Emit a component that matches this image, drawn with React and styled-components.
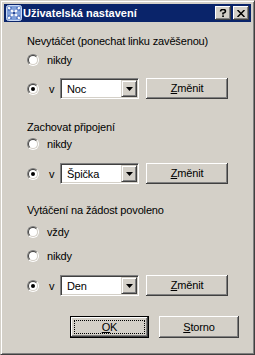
import React from 'react';
import styled, { createGlobalStyle } from 'styled-components';

const GlobalStyle = createGlobalStyle`
  html, body {
    margin: 0;
    padding: 0;
    background: #d4d0c8;
  }
  body {
    font-family: 'Liberation Sans', Arial, sans-serif;
    font-size: 11px;
    letter-spacing: -0.15px;
    color: #000;
  }
`;

const Window = styled.div`
  box-sizing: border-box;
  width: 255px;
  height: 355px;
  background: #d4d0c8;
  border: 1px solid;
  border-color: #d4d0c8 #404040 #404040 #d4d0c8;
  box-shadow: inset 1px 1px #fff, inset -1px -1px #808080;
  padding: 3px;
  display: flex;
  flex-direction: column;
`;

const TitleBar = styled.div`
  height: 18px;
  background: #0a246a;
  display: flex;
  align-items: center;
  padding: 0 2px;
`;

const TitleText = styled.span`
  flex: 1;
  margin-left: 1px;
  color: #fff;
  font-weight: bold;
  font-size: 11px;
  letter-spacing: 0;
  white-space: nowrap;
`;

const CaptionButton = styled.div`
  box-sizing: border-box;
  width: 16px;
  height: 14px;
  margin-left: ${p => p.gap || 0}px;
  background: #d4d0c8;
  box-shadow: inset -1px -1px #404040, inset 1px 1px #fff, inset -2px -2px #808080;
  display: flex;
  align-items: center;
  justify-content: center;
`;

const Client = styled.div`
  flex: 1;
  display: flex;
  flex-direction: column;
  padding: 0 12px 0 23px;
`;

const SectionLabel = styled.div`
  height: 13px;
  line-height: 13px;
  margin-top: ${p => p.top}px;
  white-space: nowrap;
`;

const RadioRow = styled.div`
  height: ${p => (p.tall ? 21 : 16)}px;
  margin-top: ${p => p.top}px;
  display: flex;
  align-items: center;
`;

const RadioWrap = styled.span`
  position: relative;
  display: flex;
  align-items: center;
  justify-content: center;
  width: 12px;
  height: 12px;
  flex: none;
`;

const Radio = styled.span`
  box-sizing: border-box;
  width: 12px;
  height: 12px;
  border-radius: 50%;
  border: 1px solid;
  border-color: #808080 #fff #fff #808080;
  display: flex;
  align-items: center;
  justify-content: center;

  &::before {
    content: '';
    box-sizing: border-box;
    width: 10px;
    height: 10px;
    border-radius: 50%;
    border: 1px solid;
    border-color: #404040 #d4d0c8 #d4d0c8 #404040;
    background: #fff;
  }
`;

const Dot = styled.span`
  position: absolute;
  width: 4px;
  height: 4px;
  border-radius: 50%;
  background: #000;
`;

const RadioLabel = styled.span`
  margin-left: ${p => p.gap}px;
  width: ${p => (p.fixed ? `${p.fixed}px` : 'auto')};
  white-space: nowrap;
`;

const Combo = styled.div`
  box-sizing: border-box;
  width: 79px;
  height: 21px;
  background: #fff;
  border: 1px solid;
  border-color: #808080 #fff #fff #808080;
  box-shadow: inset 1px 1px #404040, inset -1px -1px #d4d0c8;
  padding: 2px;
  display: flex;
  align-items: center;
`;

const ComboText = styled.span`
  flex: 1;
  padding-left: 4px;
`;

const ComboArrow = styled.span`
  box-sizing: border-box;
  width: 16px;
  height: 17px;
  margin-right: -1px;
  background: #d4d0c8;
  border: 1px solid;
  border-color: #d4d0c8 #404040 #404040 #d4d0c8;
  box-shadow: inset 1px 1px #fff, inset -1px -1px #808080;
  display: flex;
  align-items: center;
  justify-content: center;
`;

const Button = styled.div`
  box-sizing: border-box;
  width: ${p => p.w || 80}px;
  height: ${p => p.h || 21}px;
  margin-left: ${p => p.gap || 0}px;
  background: #d4d0c8;
  box-shadow: inset -1px -1px #404040, inset 1px 1px #fff, inset -2px -2px #808080;
  border: ${p => (p.primary ? '1px solid #000' : 'none')};
  position: relative;
  display: flex;
  align-items: center;
  justify-content: center;
  padding-bottom: 1px;
`;

const Focus = styled.span`
  position: absolute;
  inset: 3px;
  border: 1px dotted #000;
`;

const ButtonRow = styled.div`
  margin-top: ${p => p.top}px;
  display: flex;
  justify-content: flex-end;
`;

const AppIcon = () => (
  <svg width="16" height="16" viewBox="0 0 16 16">
    <rect x="0.5" y="0.5" width="15" height="15" rx="2" fill="#7f9fd8" stroke="#c8d8f4" />
    <path d="M3 3 L7 7 M13 3 L9 7 M3 13 L7 9 M13 13 L9 9" stroke="#fff" strokeWidth="2.2" strokeLinecap="round" />
    <circle cx="8" cy="8" r="1.6" fill="#2a4a9a" />
    <path d="M2 5 h3 v-3 M14 5 h-3 v-3 M2 11 h3 v3 M14 11 h-3 v3" stroke="#3056b0" strokeWidth="1" fill="none" />
  </svg>
);

const ArrowDown = () => (
  <svg width="7" height="4" viewBox="0 0 7 4">
    <path d="M0 0 H7 L3.5 4 Z" fill="#000" />
  </svg>
);

const RadioButton = ({ checked }) => (
  <RadioWrap>
    <Radio />
    {checked && <Dot />}
  </RadioWrap>
);

const ChoiceRow = ({ top, value }) => (
  <RadioRow tall top={top}>
    <RadioButton checked />
    <RadioLabel gap={10} fixed={11}>v</RadioLabel>
    <Combo>
      <ComboText>{value}</ComboText>
      <ComboArrow><ArrowDown /></ComboArrow>
    </Combo>
    <Button gap={7} w={82}>
      <span><u>Z</u>měnit</span>
    </Button>
  </RadioRow>
);

const App = () => (
  <>
    <GlobalStyle />
    <Window>
      <TitleBar>
        <AppIcon />
        <TitleText>Uživatelská nastavení</TitleText>
        <CaptionButton>
          <svg width="8" height="8" viewBox="0 0 8 8">
            <path d="M1.5 2.5 Q1.5 0.5 4 0.5 Q6.5 0.5 6.5 2.2 Q6.5 3.5 4 4.2 V5.5" stroke="#000" strokeWidth="1.6" fill="none" />
            <rect x="3.2" y="6.4" width="1.7" height="1.6" fill="#000" />
          </svg>
        </CaptionButton>
        <CaptionButton gap={2}>
          <svg width="8" height="7" viewBox="0 0 8 7">
            <path d="M0.5 0 L7.5 7 M7.5 0 L0.5 7" stroke="#000" strokeWidth="1.5" />
          </svg>
        </CaptionButton>
      </TitleBar>
      <Client>
        <SectionLabel top={13}>Nevytáčet (ponechat linku zavěšenou)</SectionLabel>
        <RadioRow top={4}>
          <RadioButton />
          <RadioLabel gap={8}>nikdy</RadioLabel>
        </RadioRow>
        <ChoiceRow top={10} value="Noc" />

        <SectionLabel top={22}>Zachovat připojení</SectionLabel>
        <RadioRow top={2}>
          <RadioButton />
          <RadioLabel gap={8}>nikdy</RadioLabel>
        </RadioRow>
        <ChoiceRow top={11} value="Špička" />

        <SectionLabel top={20}>Vytáčení na žádost povoleno</SectionLabel>
        <RadioRow top={7}>
          <RadioButton />
          <RadioLabel gap={8}>vždy</RadioLabel>
        </RadioRow>
        <RadioRow top={8}>
          <RadioButton />
          <RadioLabel gap={8}>nikdy</RadioLabel>
        </RadioRow>
        <ChoiceRow top={11} value="Den" />

        <ButtonRow top={20}>
          <Button primary w={79} h={22}>
            <Focus />
            <span><u>O</u>K</span>
          </Button>
          <Button w={80} h={22} gap={10}>
            <span><u>S</u>torno</span>
          </Button>
        </ButtonRow>
      </Client>
    </Window>
  </>
);

export default App;
